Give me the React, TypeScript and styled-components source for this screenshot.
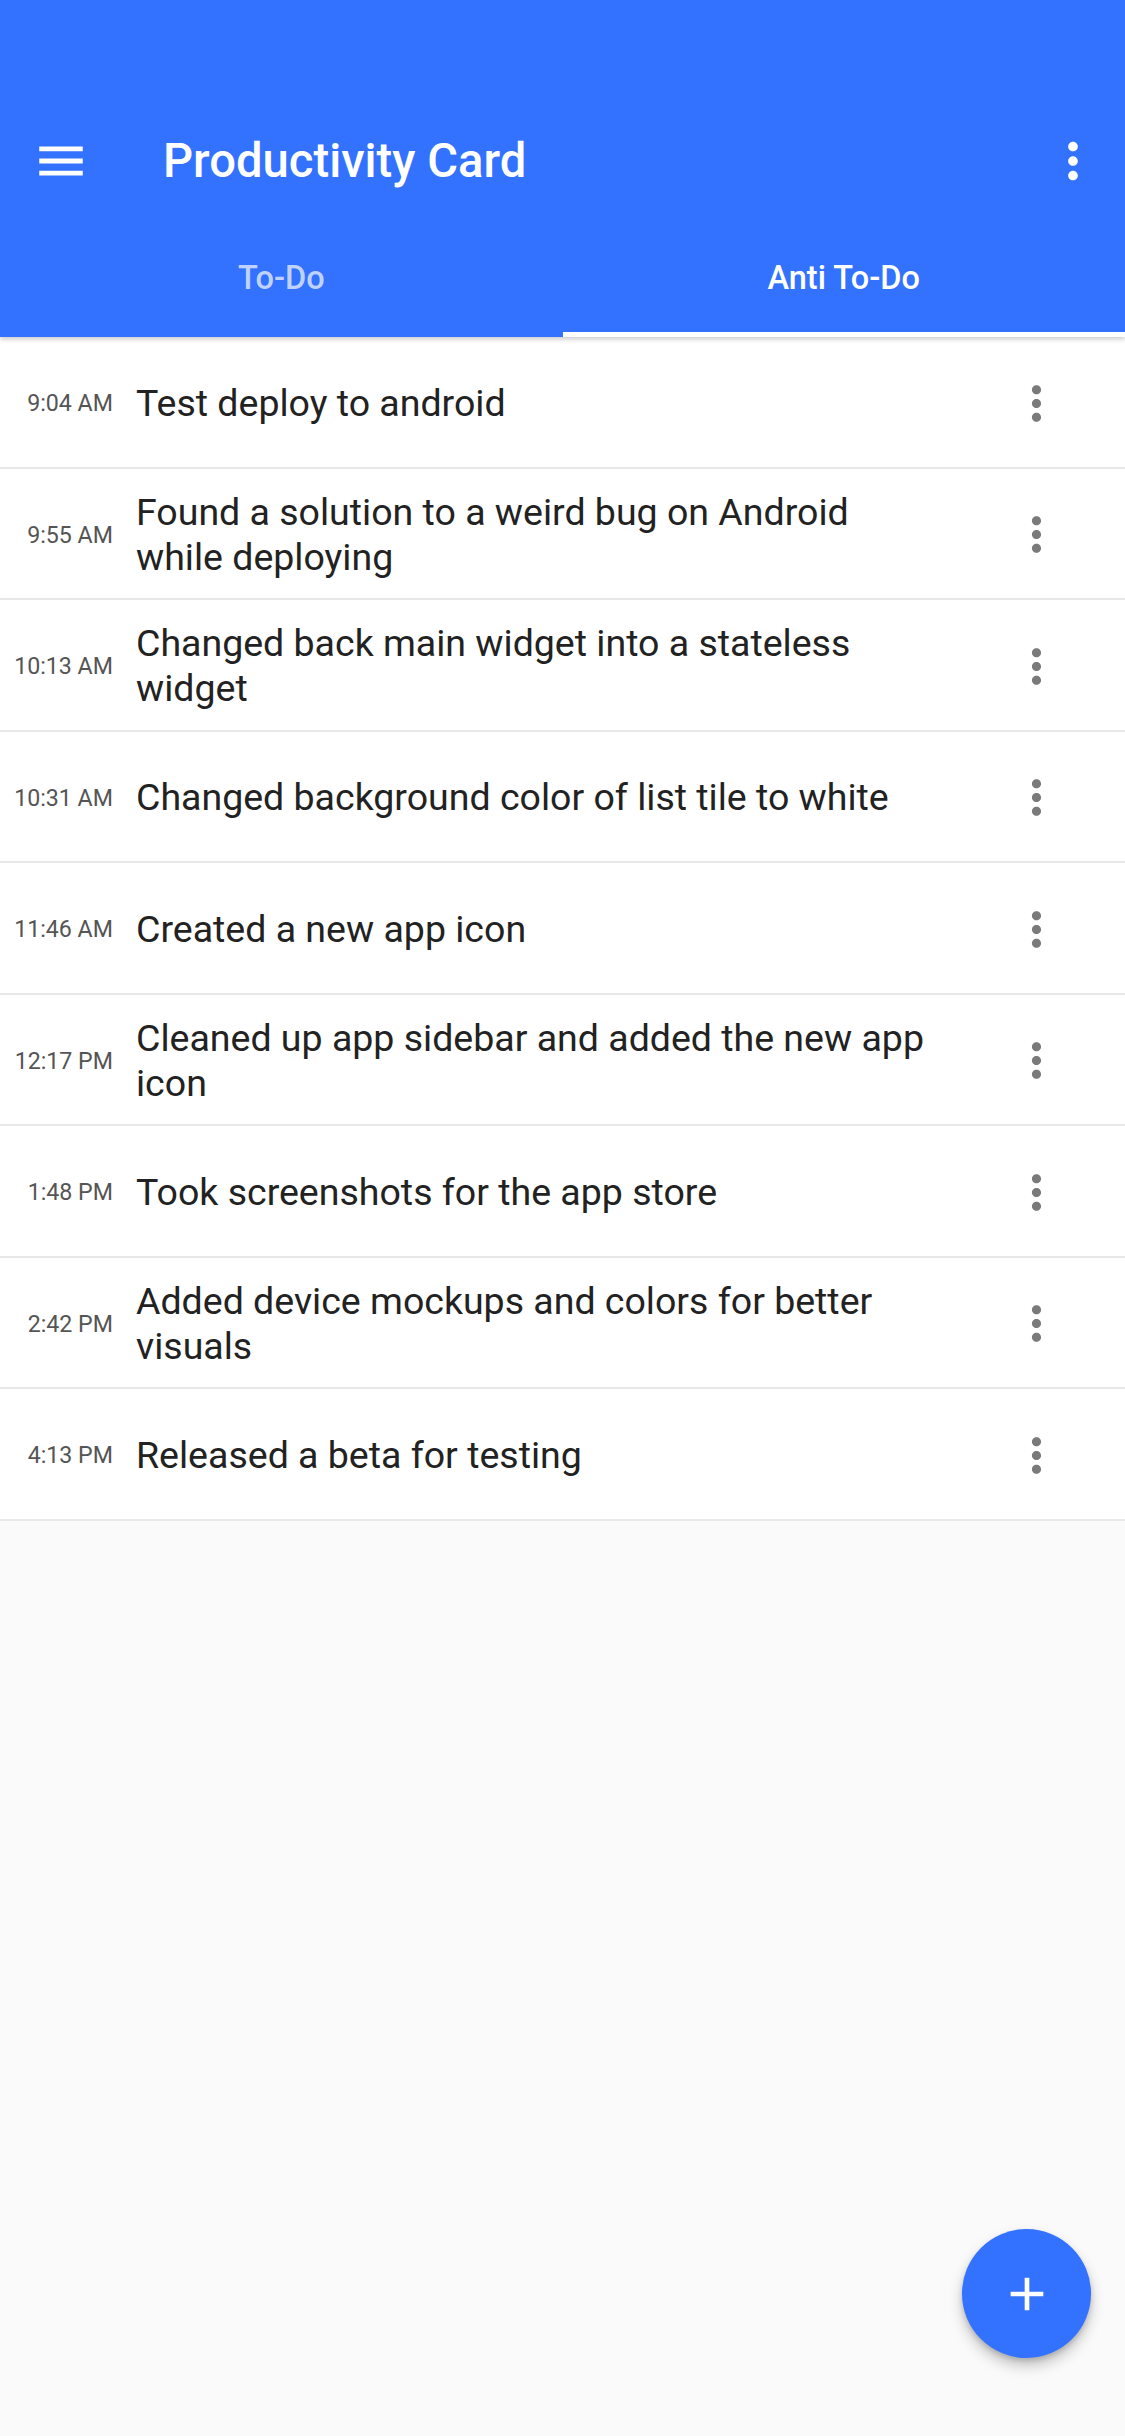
import React from "react";
import styled, { createGlobalStyle } from "styled-components";
import { MdMenu, MdMoreVert, MdAdd } from "react-icons/md";

const GlobalStyle = createGlobalStyle`
  html, body {
    margin: 0;
    padding: 0;
    background: #fafafa;
  }
  body {
    font-family: Roboto, "Noto Sans", "Liberation Sans", sans-serif;
    -webkit-font-smoothing: antialiased;
  }
  * { box-sizing: border-box; }
`;

const BLUE = "#3371ff";

const Screen = styled.div`
  position: relative;
  width: 1125px;
  min-height: 2436px;
  background: #fafafa;
  display: flex;
  flex-direction: column;
`;

const Header = styled.header`
  position: relative;
  z-index: 2;
  background: ${BLUE};
  padding-top: 104px;
  box-shadow: 0 2px 5px rgba(0, 0, 0, 0.22);
  display: flex;
  flex-direction: column;
`;

const Toolbar = styled.div`
  height: 113px;
  display: flex;
  align-items: center;
  padding: 0 23px 0 32px;
`;

const IconButton = styled.button<{ $size: number; $color: string }>`
  width: ${(p) => p.$size}px;
  height: ${(p) => p.$size}px;
  padding: 0;
  border: none;
  background: transparent;
  color: ${(p) => p.$color};
  display: flex;
  align-items: center;
  justify-content: center;
  flex-shrink: 0;
  svg {
    width: ${(p) => p.$size}px;
    height: ${(p) => p.$size}px;
    display: block;
  }
`;

const Title = styled.h1`
  margin: 2px 0 0 73px;
  flex: 1;
  color: #ffffff;
  font-size: 47.2px;
  font-weight: 500;
  letter-spacing: 0;
  line-height: 1;
`;

const TabBar = styled.nav`
  display: grid;
  grid-template-columns: 1fr 1fr;
  height: 120px;
`;

const Tab = styled.div<{ $active?: boolean }>`
  display: flex;
  align-items: center;
  justify-content: center;
  font-size: 32.5px;
  font-weight: 500;
  color: ${(p) => (p.$active ? "#ffffff" : "rgba(255,255,255,0.7)")};
  border-bottom: 5px solid ${(p) => (p.$active ? "#ffffff" : "transparent")};
  padding-top: 7px;
`;

const List = styled.ul`
  list-style: none;
  margin: 0;
  padding: 0;
`;

const Row = styled.li`
  display: flex;
  align-items: center;
  height: 131.5px;
  background: #ffffff;
  border-bottom: 2px solid #e8e8e8;
  padding-right: 61px;
  padding-top: 3px;
`;

const Time = styled.span`
  width: 113px;
  flex-shrink: 0;
  text-align: right;
  font-size: 23.2px;
  color: #555555;
`;

const Text = styled.span`
  flex: 1;
  margin-left: 23px;
  margin-right: 72px;
  font-size: 37.5px;
  line-height: 45px;
  color: #222222;
`;

const Fab = styled.button`
  position: absolute;
  right: 34px;
  bottom: 78px;
  width: 129px;
  height: 129px;
  border-radius: 50%;
  border: none;
  background: ${BLUE};
  color: #ffffff;
  display: flex;
  align-items: center;
  justify-content: center;
  box-shadow: 0 8px 14px rgba(0, 0, 0, 0.22), 0 3px 5px rgba(0, 0, 0, 0.14);
  svg {
    width: 56px;
    height: 56px;
  }
`;

const entries: { time: string; text: string }[] = [
  { time: "9:04 AM", text: "Test deploy to android" },
  { time: "9:55 AM", text: "Found a solution to a weird bug on Android while deploying" },
  { time: "10:13 AM", text: "Changed back main widget into a stateless widget" },
  { time: "10:31 AM", text: "Changed background color of list tile to white" },
  { time: "11:46 AM", text: "Created a new app icon" },
  { time: "12:17 PM", text: "Cleaned up app sidebar and added the new app icon" },
  { time: "1:48 PM", text: "Took screenshots for the app store" },
  { time: "2:42 PM", text: "Added device mockups and colors for better visuals" },
  { time: "4:13 PM", text: "Released a beta for testing" },
];

export default function App() {
  return (
    <Screen>
      <GlobalStyle />
      <Header>
        <Toolbar>
          <IconButton $size={58} $color="#ffffff" aria-label="menu">
            <MdMenu />
          </IconButton>
          <Title>Productivity Card</Title>
          <IconButton $size={58} $color="#ffffff" aria-label="more">
            <MdMoreVert />
          </IconButton>
        </Toolbar>
        <TabBar>
          <Tab>To-Do</Tab>
          <Tab $active>Anti To-Do</Tab>
        </TabBar>
      </Header>
      <List>
        {entries.map((e) => (
          <Row key={e.time}>
            <Time>{e.time}</Time>
            <Text>{e.text}</Text>
            <IconButton $size={55} $color="#7a7a7a" aria-label="options">
              <MdMoreVert />
            </IconButton>
          </Row>
        ))}
      </List>
      <Fab aria-label="add">
        <MdAdd />
      </Fab>
    </Screen>
  );
}
